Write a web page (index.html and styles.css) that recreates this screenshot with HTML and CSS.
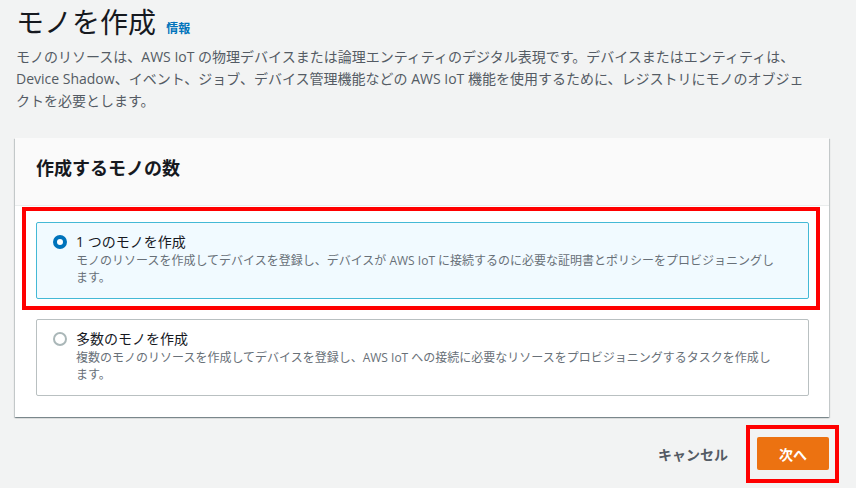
FILE: index.html
```html
<!DOCTYPE html>
<html lang="ja">
<head>
  <meta charset="UTF-8">
  <title>モノを作成</title>
  <link rel="stylesheet" href="styles.css">
</head>
<body>
  <div class="page">
    <div class="page-head">
      <h1 class="page-title">モノを作成 <a class="info-link" href="#">情報</a></h1>
      <p class="page-desc">モノのリソースは、AWS IoT の物理デバイスまたは論理エンティティのデジタル表現です。デバイスまたはエンティティは、Device Shadow、イベント、ジョブ、デバイス管理機能などの AWS IoT 機能を使用するために、レジストリにモノのオブジェクトを必要とします。</p>
    </div>

    <div class="card">
      <div class="card-head">作成するモノの数</div>
      <div class="card-body">
        <div class="mark mark-tile">
          <label class="tile selected">
            <span class="radio"></span>
            <span class="tile-text">
              <span class="tile-label">1 つのモノを作成</span>
              <span class="tile-desc">モノのリソースを作成してデバイスを登録し、デバイスが AWS IoT に接続するのに必要な証明書とポリシーをプロビジョニングします。</span>
            </span>
          </label>
        </div>
        <label class="tile">
          <span class="radio"></span>
          <span class="tile-text">
            <span class="tile-label">多数のモノを作成</span>
            <span class="tile-desc">複数のモノのリソースを作成してデバイスを登録し、AWS IoT への接続に必要なリソースをプロビジョニングするタスクを作成します。</span>
          </span>
        </label>
      </div>
    </div>

    <div class="actions">
      <button class="btn-link">キャンセル</button>
      <div class="mark mark-btn">
        <button class="btn-primary">次へ</button>
      </div>
    </div>
  </div>
</body>
</html>
```

FILE: styles.css
```css
body {
  margin: 0;
  background: #f2f3f3;
  color: #16191f;
  font-family: "Open Sans", "Noto Sans CJK JP", sans-serif;
}
.page {
  padding: 4px 27px 0 15px;
}
.page-head {
  padding-left: 1px;
}
.page-title {
  margin: 0;
  height: 36px;
  font-size: 28px;
  font-weight: 400;
  line-height: 36px;
}
.info-link {
  margin-left: 3px;
  font-size: 12px;
  font-weight: 700;
  line-height: 1;
  color: #0073bb;
  text-decoration: none;
}
.page-desc {
  margin: 6px 0 0;
  max-width: 792px;
  font-size: 14px;
  line-height: 22px;
  color: #545b64;
}
.card {
  margin-top: 26px;
  background: #fff;
  box-shadow: 0 1px 1px 0 rgba(0, 28, 36, 0.3), 1px 1px 1px 0 rgba(0, 28, 36, 0.15), -1px 1px 1px 0 rgba(0, 28, 36, 0.15);
}
.card-head {
  padding: 17px 20px 24px 21px;
  background: #fafafa;
  border-bottom: 1px solid #eaeded;
  font-size: 18px;
  font-weight: 700;
  line-height: 26px;
}
.card-body {
  padding: 1px 20px 21px 21px;
}
.mark {
  border: 4px solid #ff0000;
}
.mark-tile {
  margin: 0 -11px 9px -14px;
  padding: 11px 7px 7px 10px;
}
.tile {
  display: flex;
  gap: 9px;
  padding: 9px 20px 12px 16px;
  border: 1px solid #b9c0c1;
  border-radius: 2px;
  cursor: pointer;
}
.tile.selected {
  background: #f1faff;
  border-color: #44b9d6;
}
.radio {
  flex: none;
  box-sizing: border-box;
  width: 14px;
  height: 14px;
  margin-top: 3px;
  border: 2px solid #aab7b8;
  border-radius: 50%;
  background: #fff;
}
.tile.selected .radio {
  border: 4px solid #0073bb;
}
.tile-text {
  display: flex;
  flex-direction: column;
}
.tile-label {
  font-size: 14px;
  line-height: 20px;
}
.tile-desc {
  max-width: 703px;
  font-size: 12px;
  line-height: 17px;
  color: #687078;
}
.actions {
  display: flex;
  justify-content: flex-end;
  align-items: center;
  gap: 18px;
  margin-top: 8px;
}
.btn-link {
  border: none;
  background: none;
  padding: 0;
  font: inherit;
  font-size: 14px;
  font-weight: 700;
  color: #545b64;
  cursor: pointer;
}
.mark-btn {
  margin-right: -10px;
  padding: 8px 6px 9px 7px;
}
.btn-primary {
  display: block;
  width: 72px;
  height: 33px;
  border: none;
  border-radius: 2px;
  background: #ec7211;
  color: #fff;
  font: inherit;
  font-size: 14px;
  font-weight: 700;
  cursor: pointer;
}
```
